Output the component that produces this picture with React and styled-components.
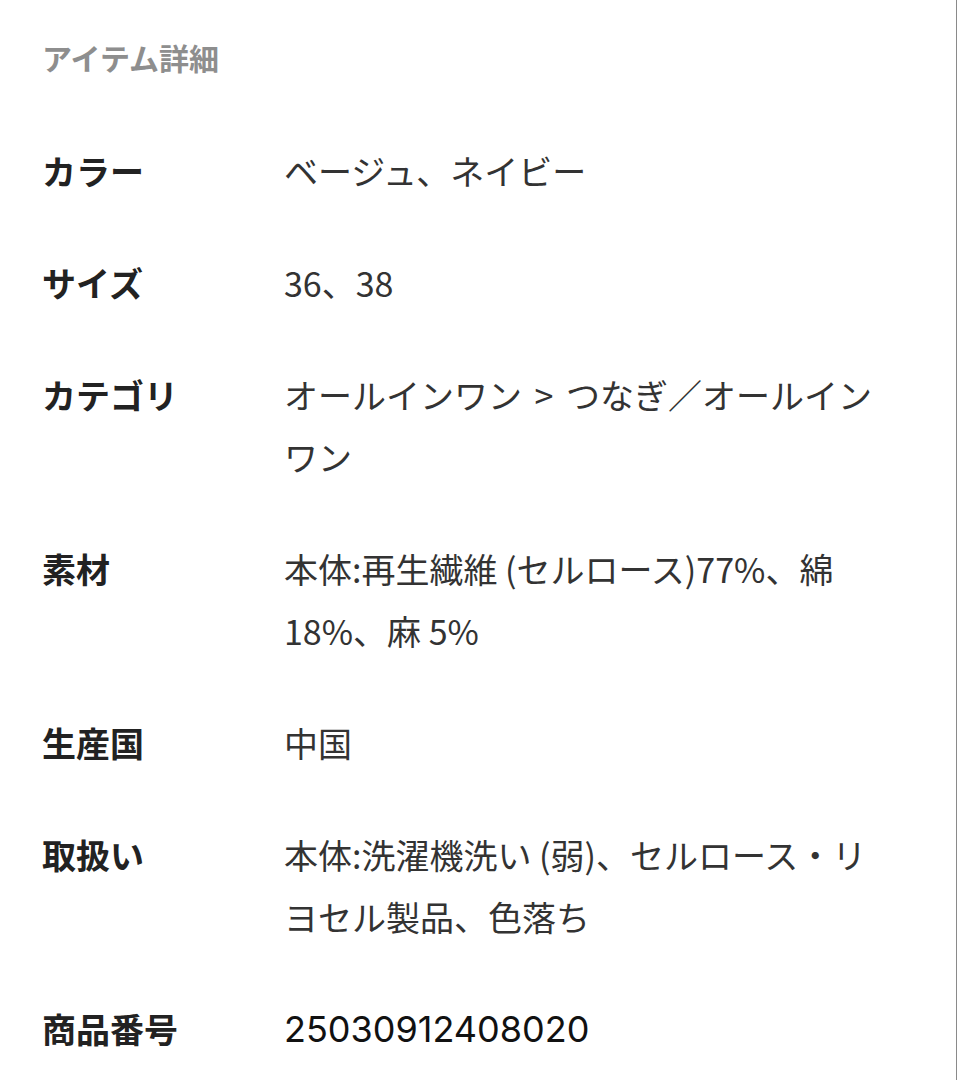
import React from "react";
import styled, { createGlobalStyle } from "styled-components";

const items = [
  { label: "カラー", value: "ベージュ、ネイビー" },
  { label: "サイズ", value: "36、38" },
  { label: "カテゴリ", value: "オールインワン > つなぎ／オールインワン", wide: true },
  { label: "素材", value: "本体:再生繊維 (セルロース)77%、綿18%、麻 5%" },
  { label: "生産国", value: "中国" },
  { label: "取扱い", value: "本体:洗濯機洗い (弱)、セルロース・リヨセル製品、色落ち" },
  { label: "商品番号", value: "25030912408020", code: true },
];

const App = () => {
  return (
    <>
      <GlobalStyle />
      <Page>
        <Title>アイテム詳細</Title>
        <List>
          {items.map((item) => (
            <Row key={item.label}>
              <Label>{item.label}</Label>
              <Value $code={item.code} $wide={item.wide}>
                {item.value}
              </Value>
            </Row>
          ))}
        </List>
      </Page>
    </>
  );
};

const GlobalStyle = createGlobalStyle`
  html, body {
    margin: 0;
    padding: 0;
    background: #fff;
  }
  body {
    font-family: "Noto Sans CJK JP", "Noto Sans", sans-serif;
  }
`;

const Page = styled.div`
  width: 957px;
  height: 1080px;
  box-sizing: border-box;
  padding: 37px 56px 0 42px;
  border-right: 1px solid #8a8a8a;
  overflow: hidden;
`;

const Title = styled.h2`
  margin: 0;
  font-size: 30px;
  line-height: 40px;
  font-weight: 700;
  color: #8e8e8e;
`;

const List = styled.dl`
  margin: 63px 0 0;
  display: flex;
  flex-direction: column;
  gap: 50px;
`;

const Row = styled.div`
  display: grid;
  grid-template-columns: 242px 1fr;
`;

const Label = styled.dt`
  margin: 0;
  font-size: 34px;
  line-height: 62px;
  font-weight: 700;
  color: #222;
`;

const Value = styled.dd`
  margin: 0;
  font-size: ${(p) => (p.$code ? "36px" : "34px")};
  line-height: 62px;
  font-weight: 400;
  word-spacing: ${(p) => (p.$wide ? "5px" : "normal")};
  color: ${(p) => (p.$code ? "#111" : "#333")};
  font-family: ${(p) =>
    p.$code ? '"Inter", "Noto Sans CJK JP", sans-serif' : "inherit"};
`;

export default App;
